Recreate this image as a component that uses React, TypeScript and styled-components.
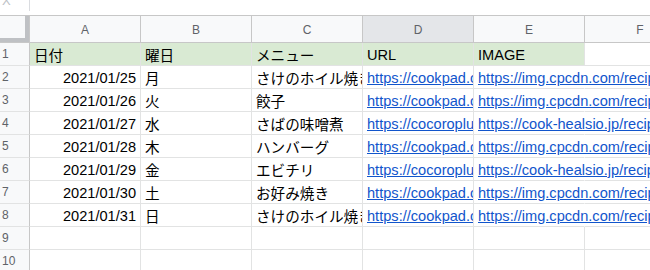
import * as React from 'react';
import styled, { createGlobalStyle } from 'styled-components';

const GlobalStyle = createGlobalStyle`
  html, body {
    margin: 0;
    padding: 0;
    background: #ffffff;
  }
  body {
    font-family: "Liberation Sans", Arial, "Noto Sans CJK JP", sans-serif;
    overflow: hidden;
  }
`;

const Page = styled.div`
  width: 650px;
  height: 270px;
  overflow: hidden;
  background: #fff;
`;

const FormulaBar = styled.div`
  display: flex;
  height: 16px;
  box-sizing: border-box;
  border-bottom: 1px solid #c7c7c7;
`;

const FxBox = styled.div`
  width: 30px;
  height: 11px;
  box-sizing: border-box;
  border-right: 1px solid #dadce0;
  overflow: hidden;
  color: #bdc1c6;
  font-size: 13px;
  line-height: 13px;
  padding-left: 2px;

  span {
    display: block;
    margin-top: -6px;
  }
`;

const Grid = styled.div`
  display: grid;
  grid-template-columns: 30px repeat(6, 111px);
  grid-template-rows: 27px repeat(10, 23px);
`;

const Corner = styled.div`
  box-sizing: border-box;
  background: #f8f9fa;
  border-right: 1px solid #c7c7c7;
  border-bottom: 1px solid #c7c7c7;
  box-shadow: inset -4px -4px 0 #bfc1c4;
`;

const ColHead = styled.div<{ $active?: boolean }>`
  box-sizing: border-box;
  background: ${(p) => (p.$active ? '#e4e6e9' : '#f8f9fa')};
  border-right: 1px solid #c7c7c7;
  border-bottom: 1px solid #c7c7c7;
  color: #5f6368;
  font-size: 12px;
  display: flex;
  align-items: center;
  justify-content: center;
  padding-top: 2px;
`;

const RowHead = styled.div`
  box-sizing: border-box;
  background: #f8f9fa;
  border-right: 1px solid #c7c7c7;
  border-bottom: 1px solid #e2e3e3;
  color: #5f6368;
  font-size: 12px;
  display: flex;
  align-items: center;
  padding-left: 2px;
`;

// $spill: text runs on into the empty cell to its right, like Sheets does
const Cell = styled.div<{ $head?: boolean; $align?: 'left' | 'right'; $spill?: boolean }>`
  box-sizing: border-box;
  position: relative;
  z-index: ${(p) => (p.$spill ? 1 : 0)};
  background: ${(p) => (p.$head ? '#d9ead3' : 'transparent')};
  border-right: 1px solid ${(p) => (p.$spill ? 'transparent' : '#e2e3e3')};
  border-bottom: 1px solid #e2e3e3;
  font-size: 14.6px;
  color: #000;
  white-space: nowrap;
  overflow: ${(p) => (p.$spill ? 'visible' : 'hidden')};
  display: flex;
  align-items: center;
  justify-content: ${(p) => (p.$align === 'right' ? 'flex-end' : 'flex-start')};
  padding: 1px 4px 0 4px;
  font-family: "Liberation Sans", Arial, "Noto Sans CJK JP", sans-serif;
`;

const LinkText = styled.span`
  color: #1155cc;
  text-decoration: underline;
`;

type Row = [string, string, string, string, string];

const rows: Row[] = [
  ['2021/01/25', '月', 'さけのホイル焼き', 'https://cookpad.com/recipe', 'https://img.cpcdn.com/recipes'],
  ['2021/01/26', '火', '餃子', 'https://cookpad.com/recipe', 'https://img.cpcdn.com/recipes'],
  ['2021/01/27', '水', 'さばの味噌煮', 'https://cocoroplus.jp/recipe', 'https://cook-healsio.jp/recipe'],
  ['2021/01/28', '木', 'ハンバーグ', 'https://cookpad.com/recipe', 'https://img.cpcdn.com/recipes'],
  ['2021/01/29', '金', 'エビチリ', 'https://cocoroplus.jp/recipe', 'https://cook-healsio.jp/recipe'],
  ['2021/01/30', '土', 'お好み焼き', 'https://cookpad.com/recipe', 'https://img.cpcdn.com/recipes'],
  ['2021/01/31', '日', 'さけのホイル焼き', 'https://cookpad.com/recipe', 'https://img.cpcdn.com/recipes'],
];

const columns = ['A', 'B', 'C', 'D', 'E', 'F'];
const titles = ['日付', '曜日', 'メニュー', 'URL', 'IMAGE'];

export default function App() {
  return (
    <Page>
      <GlobalStyle />
      <FormulaBar>
        <FxBox>
          <span>X</span>
        </FxBox>
      </FormulaBar>
      <Grid>
        <Corner />
        {columns.map((c) => (
          <ColHead key={c} $active={c === 'D'}>
            {c}
          </ColHead>
        ))}

        <RowHead>1</RowHead>
        {titles.map((t) => (
          <Cell key={t} $head>
            {t}
          </Cell>
        ))}
        <Cell />

        {rows.map((r, i) => (
          <React.Fragment key={r[0]}>
            <RowHead>{i + 2}</RowHead>
            <Cell $align="right">{r[0]}</Cell>
            <Cell>{r[1]}</Cell>
            <Cell>{r[2]}</Cell>
            <Cell>
              <LinkText>{r[3]}</LinkText>
            </Cell>
            <Cell $spill>
              <LinkText>{r[4]}</LinkText>
            </Cell>
            <Cell />
          </React.Fragment>
        ))}

        {[9, 10].map((n) => (
          <React.Fragment key={n}>
            <RowHead>{n}</RowHead>
            {columns.map((c) => (
              <Cell key={c} />
            ))}
          </React.Fragment>
        ))}
      </Grid>
    </Page>
  );
}
